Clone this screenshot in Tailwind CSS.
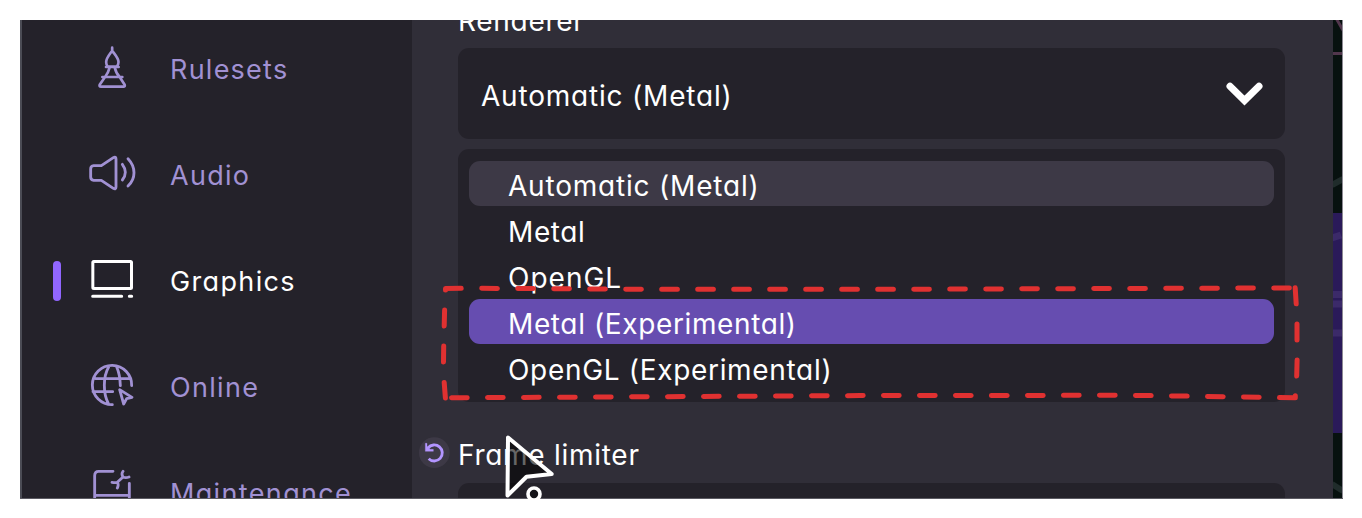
<!DOCTYPE html>
<html lang="en">
<head>
<meta charset="utf-8">
<title>Settings – Graphics</title>
<script src="https://cdn.jsdelivr.net/npm/@tailwindcss/browser@4"></script>
</head>
<body class="bg-white w-[1362px] h-[518px] overflow-hidden p-5 font-['Inter','Open_Sans',sans-serif] text-[28px] leading-none [font-feature-settings:'cv11','ss03']">
<div class="relative flex w-[1323px] h-[479px] overflow-hidden bg-[#302e38]">
  <!-- Sidebar -->
  <nav class="flex flex-col shrink-0 w-[392px] border-l-2 border-[#4b4c55] bg-[#24222a] text-[#a191d3] text-[27px] -mt-[3px]">
    <a class="flex items-center h-[106px] shrink-0 pl-[58px]">
      <svg class="w-[70px] h-[60px] shrink-0" viewBox="0 0 210 180" fill="none" stroke="currentColor" stroke-width="8" stroke-linejoin="round" stroke-linecap="round"><path d="M96.500 23V32C89 43 78.500 54 78.500 66C79 74 83 80 87 80H106C111 80 115 74 115.500 66C115.500 54 104 43 96.500 32M78 81H116M89 82C86 94 81 104 75 111M104 82C107 94 112 104 119 111M67 111H127M75 111L59 134Q57 140 63 140H130Q136 140 134 134L119 111"/></svg>
      <span class="ml-5 -mt-0.5 tracking-[1.25px]">Rulesets</span>
    </a>
    <a class="flex items-center h-[106px] shrink-0 pl-[58px]">
      <svg class="w-[70px] h-[60px] shrink-0" viewBox="0 3 210 180" fill="none" stroke="currentColor" stroke-width="8.500" stroke-linejoin="round" stroke-linecap="round"><path d="M41 62H64L100 38Q108 34 108 42V126Q108 134 100 130L64 106H41Q32 105 32 96V72Q32 63 41 62ZM127 58Q136 70 136 82T127 105M144 41Q162 60 162 83T144 123"/></svg>
      <span class="ml-5 -mt-0.5 tracking-[1.3px]">Audio</span>
    </a>
    <a class="flex items-center h-[106px] shrink-0 pl-[31px] text-white">
      <span class="w-2 h-10 -mt-[3px] rounded-full bg-[#9166ff] mr-[19px]"></span>
      <svg class="w-[70px] h-[60px] shrink-0" viewBox="120 21 210 180" fill="none" stroke="currentColor" stroke-width="9" stroke-linejoin="round" stroke-linecap="round"><rect x="158.500" y="49.500" width="116" height="81" rx="3"/><path d="M158 154H245M268 154H275"/></svg>
      <span class="ml-5 -mt-0.5 tracking-[1.35px]">Graphics</span>
    </a>
    <a class="flex items-center h-[106px] shrink-0 pl-[58px]">
      <svg class="w-[70px] h-[60px] shrink-0" viewBox="0 9 210 180" fill="none" stroke="currentColor" stroke-width="8.500" stroke-linejoin="round" stroke-linecap="round"><path d="M155 92A59 59 0 1 0 97 149M47 71H146M39 110H98M86 36Q73 58 73 91T85 145M110 36Q120 58 121 92M119 104L131 147L140 131L156 127Z"/></svg>
      <span class="ml-5 -mt-0.5 tracking-[1.3px]">Online</span>
    </a>
    <a class="flex items-center h-[106px] shrink-0 pl-[58px]">
      <svg class="w-[70px] h-[60px] shrink-0" viewBox="0 27 210 180" fill="none" stroke="currentColor" stroke-width="8.500" stroke-linejoin="round" stroke-linecap="round"><path d="M99 49H56Q44 49 44 62V170H148V85M44 121H148M96 82Q106 84 112 82L129 66Q123 56 129 49M112 82Q117 90 112 99M129 66Q137 70 147 66"/></svg>
      <span class="ml-5 -mt-0.5 tracking-[1.35px]">Maintenance</span>
    </a>
  </nav>

  <!-- Settings content -->
  <main class="flex flex-col w-[921px] shrink-0 pl-[46px] pr-12 text-white">
    <div class="h-7 -mt-[13px] shrink-0 leading-7 tracking-[0.7px]"><span>Renderer</span></div>
    <div class="flex items-center justify-between h-[91px] shrink-0 mt-[13px] rounded-[11px] bg-[#24222a] pl-[23px] pr-[22px]">
      <span class="pt-1 tracking-[0.8px]">Automatic (Metal)</span>
      <svg class="w-[37px] h-[24px]" viewBox="0 0 37 24" fill="none" stroke="white" stroke-width="7" stroke-linecap="round"><path d="M4 4.300L18.500 18.600L33 4.300" stroke-linejoin="miter"/></svg>
    </div>
    <ul class="flex flex-col gap-px mt-[10px] h-[253px] shrink-0 rounded-[11px] bg-[#24222a] px-[11px] pt-3">
      <li class="flex items-center h-[45px] shrink-0 rounded-[11px] pl-[39px] pt-[5px] bg-[#3d3946] tracking-[0.8px]">Automatic (Metal)</li>
      <li class="flex items-center h-[45px] shrink-0 pl-[39px] pt-[5px] tracking-[0.6px]">Metal</li>
      <li class="flex items-center h-[45px] shrink-0 pl-[39px] pt-[5px] tracking-[1px]">OpenGL</li>
      <li class="flex items-center h-[45px] shrink-0 rounded-[11px] pl-[39px] pt-[5px] bg-[#664db0] tracking-[0.62px]">Metal (Experimental)</li>
      <li class="flex items-center h-[45px] shrink-0 pl-[39px] pt-[5px] tracking-[0.68px]">OpenGL (Experimental)</li>
    </ul>
    <div class="flex items-center h-8 shrink-0 mt-[36px] -ml-[39px]">
      <svg class="w-[31px] h-[31px] -mt-1" viewBox="27 51 93 93" fill="none"><circle cx="73" cy="98" r="46" fill="#3d3946"/><path d="M54 84A24 24 0 1 1 56 116" stroke="#b395ff" stroke-width="8.500"/><path d="M46 70V94H70V88H60L51 79V70Z" fill="#b395ff" stroke="#b395ff"/></svg>
      <span class="ml-2 pt-0.5 tracking-[0.72px]">Frame limiter</span>
    </div>
    <div class="mt-[13px] h-[91px] shrink-0 rounded-[11px] bg-[#24222a]"></div>
  </main>

  <!-- Slice of the game screen behind the panel -->
  <svg class="w-[10px] h-[479px] shrink-0" viewBox="1333 20 10 479" preserveAspectRatio="none">
    <path fill="#07110f" d="M1333 20h10v479h-10z"/>
    <path fill="#2a1a59" d="M1333 213h10v220h-10z"/>
    <path stroke="#51364c" stroke-width="3" d="M1333 53.500h10M1336 18l8 14"/>
    <path stroke="#202c2b" stroke-width="6" d="M1332 185l11 -6M1332 484l11 7"/>
    <path stroke="#3b2a69" stroke-width="7" d="M1332 238l9 -3M1333 294.500h10M1333 304h10M1333 333h10"/>
    <path fill="#8d8a94" d="M1342 20h1v479h-1z"/>
  </svg>
  <div class="absolute inset-x-0 bottom-0 h-px bg-[#5b5a62]"></div>

  <!-- Hand-drawn highlight and mouse cursor -->
  <svg class="absolute inset-0 w-[1323px] h-[479px]" viewBox="20 20 1323 479" fill="none">
    <g stroke="#e03131" stroke-width="5" stroke-linecap="round" stroke-linejoin="round">
      <path d="M445.500 290V288.500L461.200 288.200"/>
      <path stroke-dasharray="15.700 20.300" d="M481.700 288.300L650 289.300L900 289.300L1289.800 287.900"/>
      <path d="M1295.200 287.800L1296.200 303.800M1297 324V340M1297.100 360L1296.700 376M1295.300 395.800V397.800L1279.500 397.600"/>
      <path stroke-dasharray="15.700 20.300" d="M451.500 397.800L860 395.600L1130 395.300L1262 397.200"/>
      <path d="M444.600 310L444.200 326M443.700 346L443.500 362M444.200 382.500L445.400 398"/>
    </g>
    <path d="M508 437.500L507.500 495.500L526.500 476.800L551.700 474Z" fill="#000" fill-opacity=".6" stroke="#fff" stroke-width="4" stroke-linejoin="round"/>
    <circle cx="534" cy="494" r="6" fill="#141318" stroke="#fff" stroke-width="3.600"/>
  </svg>
</div>
</body>
</html>
